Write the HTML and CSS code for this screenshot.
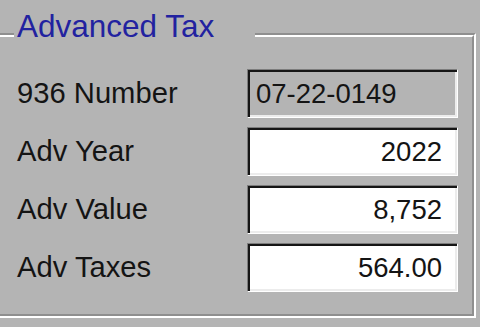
FILE: index.html
```html
<!DOCTYPE html>
<html>
<head>
<meta charset="utf-8">
<link rel="stylesheet" href="styles.css">
</head>
<body>
  <div class="group">
    <div class="group-inner">
      <div class="legend">Advanced Tax</div>
      <div class="rows">
        <div class="label">936 Number</div>
        <div class="field readonly">07-22-0149</div>
        <div class="label">Adv Year</div>
        <div class="field num">2022</div>
        <div class="label">Adv Value</div>
        <div class="field num">8,752</div>
        <div class="label">Adv Taxes</div>
        <div class="field num">564.00</div>
      </div>
    </div>
  </div>
</body>
</html>
```
FILE: styles.css
```css
html, body {
  margin: 0;
  padding: 0;
  background: #b4b4b4;
  width: 480px;
  height: 327px;
  overflow: hidden;
  font-family: "Liberation Sans", Arial, sans-serif;
}
body {
  padding-top: 33px;
  box-sizing: border-box;
}
.group {
  margin-left: -10px;
  width: 486px;
  height: 285px;
  box-sizing: border-box;
  border: 2px solid;
  border-color: #8f8f8f #ffffff #ffffff #8f8f8f;
}
.group-inner {
  position: relative;
  height: 100%;
  box-sizing: border-box;
  border: 2px solid;
  border-color: #ffffff #8f8f8f #8f8f8f #ffffff;
  padding: 32px 14px 0 23px;
}
.legend {
  position: absolute;
  left: 20px;
  top: -26px;
  padding: 0 41px 0 3px;
  height: 30px;
  line-height: 30px;
  background: #b4b4b4;
  color: #2222a0;
  font-size: 31.5px;
}
.rows {
  display: grid;
  grid-template-columns: 1fr 211px;
  grid-auto-rows: 49px;
  row-gap: 9px;
  align-items: center;
}
.label {
  font-size: 29.2px;
  color: #141414;
  line-height: 30px;
  margin-top: -2px;
}
.field {
  height: 49px;
  box-sizing: border-box;
  border: 1px solid;
  border-color: #7c7c7c #ffffff #ffffff #7c7c7c;
  box-shadow: inset 2px 2px 0 #151515, inset -2px -2px 0 #ececec;
  background: #ffffff;
  font-size: 27.5px;
  color: #141414;
  line-height: 47px;
  padding: 0 15px 0 8px;
}
.field.readonly {
  background: #b4b4b4;
}
.field.num {
  text-align: right;
}
```
